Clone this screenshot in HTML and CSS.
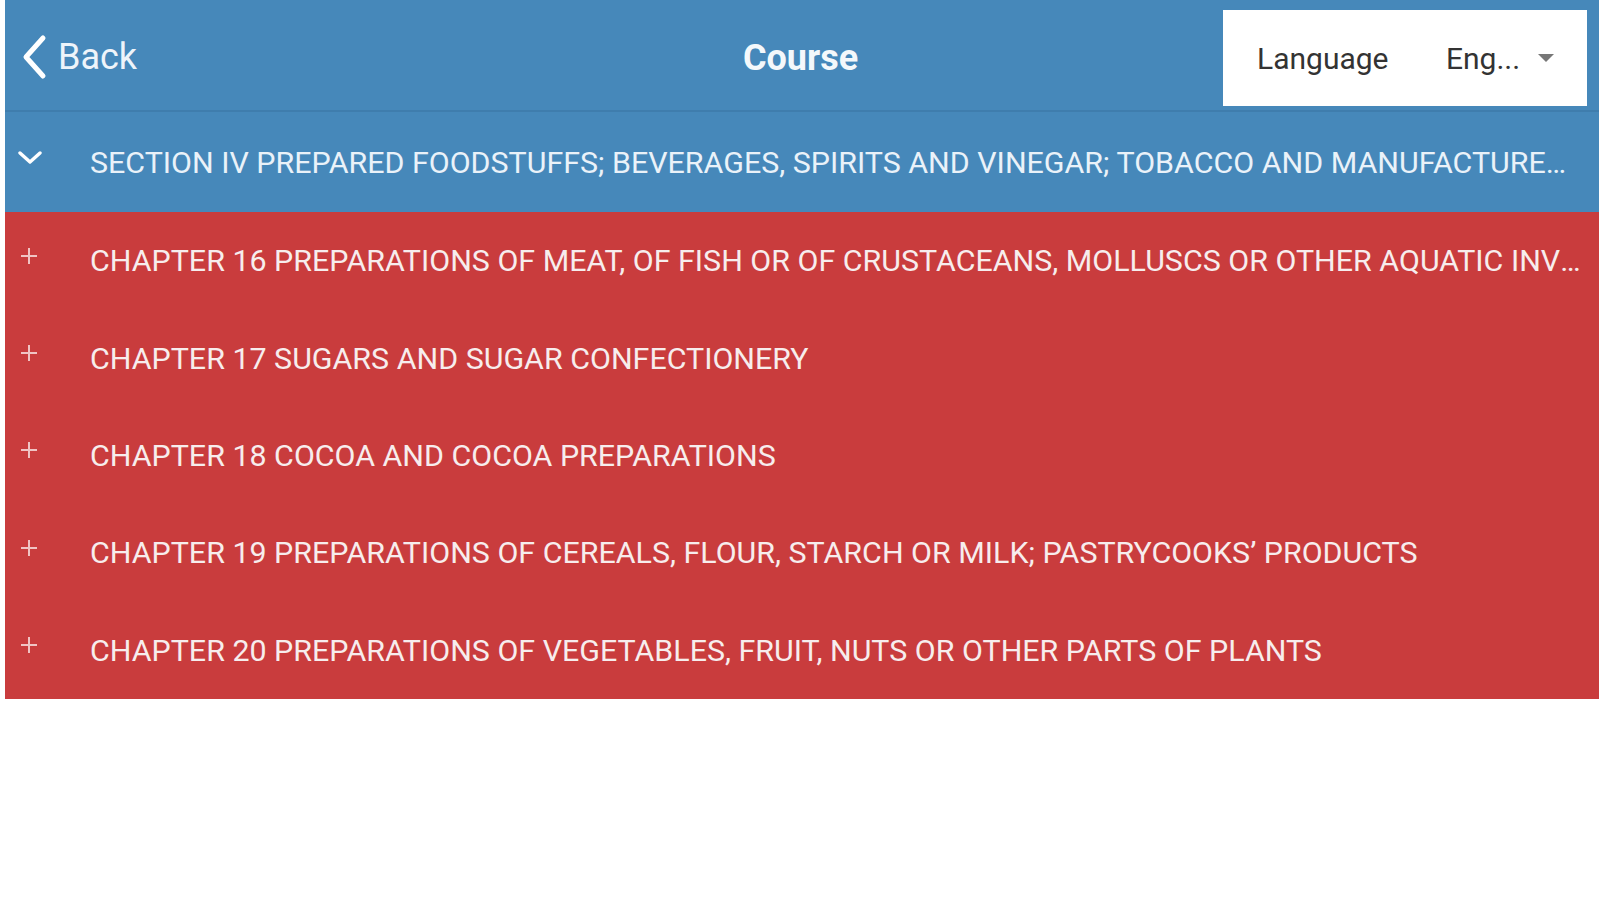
FILE: index.html
```html
<!DOCTYPE html>
<html lang="en">
<head>
    <meta charset="utf-8">
    <title>Course</title>
    <meta name="viewport" content="width=device-width, initial-scale=1">
    <link rel="stylesheet" href="styles.css">
</head>
<body>
    <header class="topBar">
        <a class="backLink" href="#">
            <svg class="backIcon" viewBox="0 0 28 46" width="28" height="46"><path d="M23 4 L6 23 L23 42" fill="none" stroke="#fff" stroke-width="5" stroke-linecap="round" stroke-linejoin="round"/></svg>
            <span>Back</span>
        </a>
        <h1 class="title">Course</h1>
        <div class="langBox">
            <span class="langLabel">Language</span>
            <span class="langValue">Eng...</span>
            <svg class="langArrow" viewBox="0 0 16 8" width="16" height="8"><path d="M0 0 L16 0 L8 8 Z" fill="#777"/></svg>
        </div>
    </header>
    <div class="sectionRow">
        <svg class="rowIcon" viewBox="0 0 24 14" width="24" height="14"><path d="M2 2 L12 11 L22 2" fill="none" stroke="#fff" stroke-width="3.4" stroke-linecap="round" stroke-linejoin="round"/></svg>
        <span class="rowText">SECTION IV PREPARED FOODSTUFFS; BEVERAGES, SPIRITS AND VINEGAR; TOBACCO AND MANUFACTURED TOBACCO SUBSTITUTES</span>
    </div>
    <ul class="chapterList">
        <li class="chapterRow">
            <svg class="rowIcon plus" viewBox="0 0 18 18" width="18" height="18"><path d="M9 1 V17 M1 9 H17" stroke="#f0c4c4" stroke-width="2"/></svg>
            <span class="rowText">CHAPTER 16 PREPARATIONS OF MEAT, OF FISH OR OF CRUSTACEANS, MOLLUSCS OR OTHER AQUATIC INVERTEBRATES</span>
        </li>
        <li class="chapterRow">
            <svg class="rowIcon plus" viewBox="0 0 18 18" width="18" height="18"><path d="M9 1 V17 M1 9 H17" stroke="#f0c4c4" stroke-width="2"/></svg>
            <span class="rowText">CHAPTER 17 SUGARS AND SUGAR CONFECTIONERY</span>
        </li>
        <li class="chapterRow">
            <svg class="rowIcon plus" viewBox="0 0 18 18" width="18" height="18"><path d="M9 1 V17 M1 9 H17" stroke="#f0c4c4" stroke-width="2"/></svg>
            <span class="rowText">CHAPTER 18 COCOA AND COCOA PREPARATIONS</span>
        </li>
        <li class="chapterRow">
            <svg class="rowIcon plus" viewBox="0 0 18 18" width="18" height="18"><path d="M9 1 V17 M1 9 H17" stroke="#f0c4c4" stroke-width="2"/></svg>
            <span class="rowText">CHAPTER 19 PREPARATIONS OF CEREALS, FLOUR, STARCH OR MILK; PASTRYCOOKS’ PRODUCTS</span>
        </li>
        <li class="chapterRow">
            <svg class="rowIcon plus" viewBox="0 0 18 18" width="18" height="18"><path d="M9 1 V17 M1 9 H17" stroke="#f0c4c4" stroke-width="2"/></svg>
            <span class="rowText">CHAPTER 20 PREPARATIONS OF VEGETABLES, FRUIT, NUTS OR OTHER PARTS OF PLANTS</span>
        </li>
    </ul>
</body>
</html>
```

FILE: styles.css
```css
body{
    font-family: Roboto, "Liberation Sans", Arial, sans-serif;
    margin: 0;
    padding: 0 0 0 5px;
    background-color: white;
}
.topBar{
    height: 112px;
    box-sizing: border-box;
    background-color: #4688ba;
    border-bottom: 2px solid #3f7dad;
    display: grid;
    grid-template-columns: 1fr auto 1fr;
    align-items: center;
    padding: 0 12px 0 15px;
    color: white;
}
.backLink{
    display: flex;
    align-items: center;
    gap: 10px;
    color: #eef4fa;
    text-decoration: none;
    font-size: 36px;
    justify-self: start;
    margin-top: 4px;
}
.backIcon{
    display: block;
}
.title{
    margin: 6px 0 0 -6px;
    font-size: 36px;
    font-weight: bold;
    color: #f4f8fb;
}
.langBox{
    justify-self: end;
    align-self: start;
    margin-top: 10px;
    width: 364px;
    height: 96px;
    box-sizing: border-box;
    background-color: white;
    display: flex;
    align-items: center;
    padding: 0 0 0 34px;
    font-size: 30px;
    color: #333;
}
.langLabel{
    width: 189px;
}
.langArrow{
    margin-left: 18px;
}
.sectionRow{
    height: 100px;
    background-color: #4688ba;
    display: flex;
    align-items: center;
    padding: 0 32px 0 13px;
}
.chapterList{
    list-style: none;
    margin: 0;
    padding: 0;
    background-color: #c93c3d;
}
.chapterRow{
    height: 97.4px;
    display: flex;
    align-items: center;
    padding: 0 18px 0 15px;
}
.rowIcon{
    flex: none;
    margin: -8px 48px 0 0;
}
.plus{
    margin: -10px 52px 0 0;
}
.rowText{
    color: #f7eded;
    font-size: 30.4px;
    white-space: nowrap;
    overflow: hidden;
    text-overflow: ellipsis;
    min-width: 0;
}
.sectionRow .rowText{
    color: #eaf2f9;
}
```
